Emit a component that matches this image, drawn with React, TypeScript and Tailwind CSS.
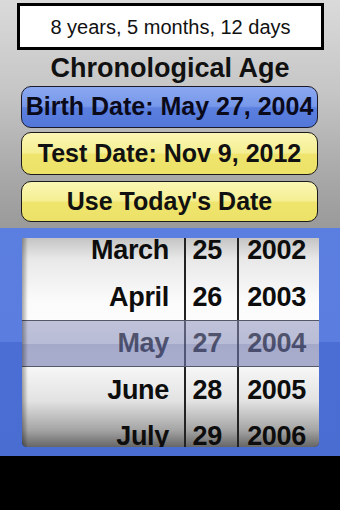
import React from "react";

const months = ["March", "April", "May", "June", "July"];
const days = ["25", "26", "27", "28", "29"];
const years = ["2002", "2003", "2004", "2005", "2006"];

const wheelBg =
  "bg-[linear-gradient(to_bottom,#c4c4c4_0%,#e8e8e8_10%,#fbfbfb_30%,#ffffff_55%,#e2e2e2_78%,#a4a4a4_92%,#666666_100%)]";

function Column({ items, width, pr }: { items: string[]; width: string; pr: string }) {
  return (
    <div className={`${width} ${wheelBg} flex flex-col shrink-0`}>
      <div className="-mt-[11px] flex flex-col">
        {items.map((t) => (
          <div
            key={t}
            className={`h-[46.5px] leading-[46.5px] text-right ${pr} text-[27px] font-bold text-[#0d0d0d] tracking-[-0.3px]`}
          >
            {t}
          </div>
        ))}
      </div>
    </div>
  );
}

export default function App() {
  return (
    <div className="w-[340px] h-[510px] flex flex-col font-['Liberation_Sans',Arial,sans-serif] overflow-hidden">
      <div className="h-[228px] shrink-0 flex flex-col bg-[linear-gradient(to_bottom,#dadada_0%,#c6c6c6_40%,#aaaaaa_75%,#9a9a9a_100%)]">
        <div className="mt-[3px] ml-[17px] w-[307px] h-[47px] border-[3px] border-black bg-white flex items-center justify-center text-[20px] text-[#111]">
          8 years, 5 months, 12 days
        </div>
        <div className="h-[36px] flex items-center justify-center text-[27px] font-bold text-[#111]">
          Chronological Age
        </div>
        <div className="ml-[21px] w-[297px] h-[42px] rounded-[10px] border-[1.5px] border-[#1a1a2a] flex items-center justify-center text-[25px] font-bold text-[#0a0a1a] bg-[linear-gradient(to_bottom,#8aa7f0_0%,#7798ea_48%,#5c80df_52%,#5377d9_100%)]">
          Birth Date: May 27, 2004
        </div>
        <div className="mt-[4px] ml-[21px] w-[297px] h-[43px] rounded-[10px] border-[1.5px] border-[#1a1a1a] flex items-center justify-center text-[25px] font-bold text-[#111] bg-[linear-gradient(to_bottom,#faf6b4_0%,#f5ef93_48%,#efe56e_52%,#ece268_100%)]">
          Test Date: Nov 9, 2012
        </div>
        <div className="mt-[6px] ml-[21px] w-[297px] h-[41px] rounded-[10px] border-[1.5px] border-[#1a1a1a] flex items-center justify-center text-[25px] font-bold text-[#111] bg-[linear-gradient(to_bottom,#faf6b4_0%,#f5ef93_48%,#efe56e_52%,#ece268_100%)]">
          Use Today's Date
        </div>
      </div>
      <div className="h-[228px] shrink-0 pt-[10px] pl-[22px] bg-[linear-gradient(to_bottom,#5b7fe0_0%,#5a7ddf_50%,#4a6ed4_50%,#4a6dd2_100%)]">
        <div className="relative w-[297px] h-[209px] overflow-hidden rounded-b-[5px] flex bg-[#2a2a2a]">
          <Column items={months} width="w-[162px]" pr="pr-[15px]" />
          <div className="w-[2px] shrink-0 bg-[#222]" />
          <Column items={days} width="w-[51px]" pr="pr-[15px]" />
          <div className="w-[2px] shrink-0 bg-[#222]" />
          <Column items={years} width="w-[80px]" pr="pr-[13px]" />
          <div className="absolute left-0 right-0 top-[82px] h-[47px] border-t border-b border-[#555868] bg-[linear-gradient(to_bottom,rgba(140,146,188,0.55)_0%,rgba(130,136,182,0.56)_50%,rgba(108,116,170,0.62)_50%,rgba(115,122,175,0.6)_100%)]" />
          <div className="absolute inset-y-0 left-0 w-[6px] bg-[linear-gradient(to_right,rgba(0,0,0,0.35),rgba(0,0,0,0))]" />
        </div>
      </div>
      <div className="flex-1 bg-black" />
    </div>
  );
}
